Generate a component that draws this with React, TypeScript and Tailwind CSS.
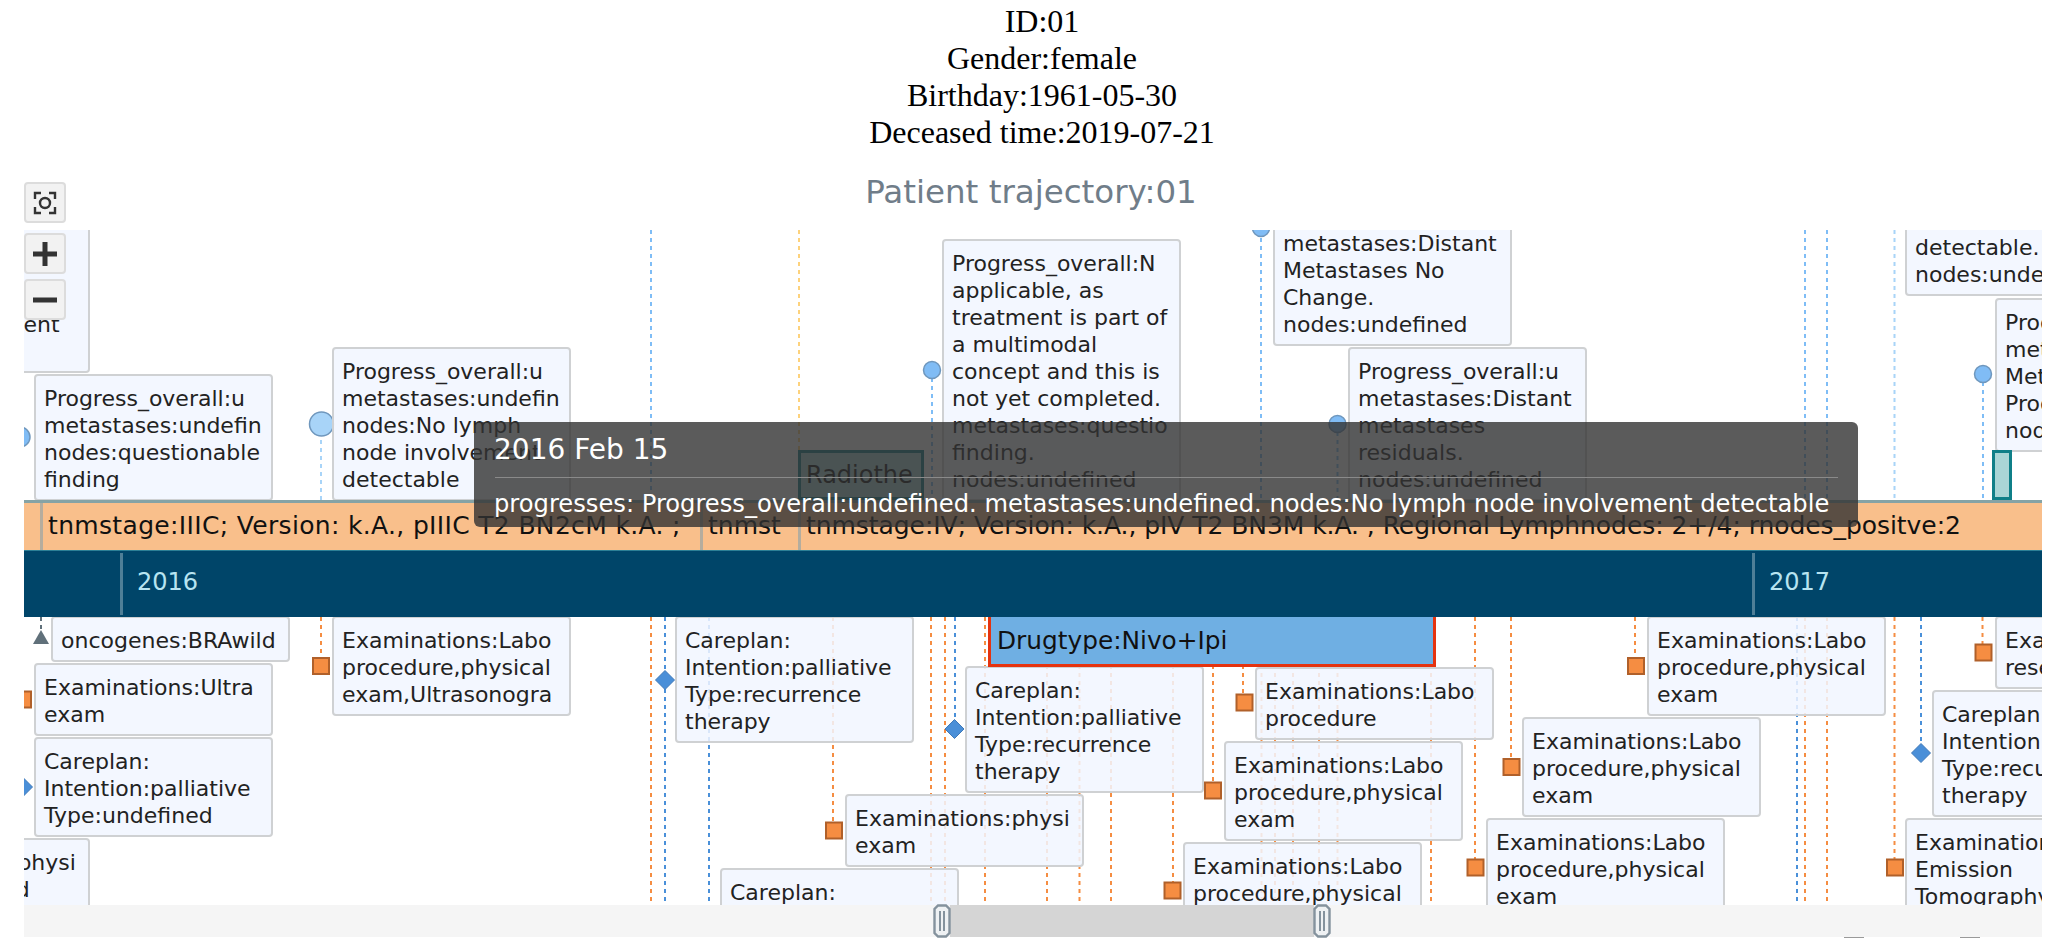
import React from "react";

type Label = { x: number; y: number; lines: string[]; w?: number };
type Line = { x: number; y1: number; y2: number; color: string };

const ORANGE = "#f58d42";
const BLUE = "#4a90d9";
const SKY = "#7fbdf6";

const upperLabels: Label[] = [
  { x: -149, y: 192, lines: ["", "Progress_overall:is", "Change.", "nodes:No lymph", "node involvement", "detectable"] },
  { x: 808, y: 130, lines: ["Progress_overall:u", "metastases:undefin", "nodes:undefined"] },
  { x: 34, y: 374, lines: ["Progress_overall:u", "metastases:undefin", "nodes:questionable", "finding"] },
  { x: 332, y: 347, lines: ["Progress_overall:u", "metastases:undefin", "nodes:No lymph", "node involvement", "detectable"] },
  {
    x: 942,
    y: 239,
    lines: [
      "Progress_overall:N",
      "applicable, as",
      "treatment is part of",
      "a multimodal",
      "concept and this is",
      "not yet completed.",
      "metastases:questio",
      "finding.",
      "nodes:undefined",
    ],
  },
  { x: 1273, y: 192, lines: ["Progress_overall:u", "metastases:Distant", "Metastases No", "Change.", "nodes:undefined"] },
  { x: 1348, y: 347, lines: ["Progress_overall:u", "metastases:Distant", "metastases", "residuals.", "nodes:undefined"] },
  { x: 1905, y: 196, lines: ["metastases:No", "detectable.", "nodes:undefined"] },
  { x: 1995, y: 298, lines: ["Progress_overall:u", "metastases:Distant", "Metastases", "Progress.", "nodes:undefined"] },
];

const lab3 = ["Examinations:Labo", "procedure,physical", "exam"];
const care4 = ["Careplan:", "Intention:palliative", "Type:recurrence", "therapy"];

const lowerLabels: Label[] = [
  { x: 51, y: 616, lines: ["oncogenes:BRAwild"] },
  { x: 34, y: 663, lines: ["Examinations:Ultra", "exam"] },
  { x: 34, y: 737, lines: ["Careplan:", "Intention:palliative", "Type:undefined"] },
  { x: -149, y: 838, lines: ["Examinations:physi", "Type:undefined"] },
  { x: 332, y: 616, lines: ["Examinations:Labo", "procedure,physical", "exam,Ultrasonogra"] },
  { x: 675, y: 616, lines: care4 },
  { x: 965, y: 666, lines: care4 },
  { x: 845, y: 794, lines: ["Examinations:physi", "exam"] },
  { x: 720, y: 868, lines: ["Careplan:", "Intention:palliative"] },
  { x: 1255, y: 667, lines: ["Examinations:Labo", "procedure"] },
  { x: 1224, y: 741, lines: lab3 },
  { x: 1183, y: 842, lines: lab3 },
  { x: 1647, y: 616, lines: lab3 },
  { x: 1522, y: 717, lines: lab3 },
  { x: 1486, y: 818, lines: lab3 },
  { x: 1995, y: 616, lines: ["Examinations:Labo", "resection"] },
  { x: 1932, y: 690, lines: care4 },
  { x: 1905, y: 818, lines: ["Examinations:Positron", "Emission", "Tomography"] },
];

const upperLines: Line[] = [
  { x: 321, y1: 424, y2: 500, color: "#a8d4f8" },
  { x: 651, y1: 230, y2: 500, color: SKY },
  { x: 799, y1: 230, y2: 450, color: "#fdd27c" },
  { x: 932, y1: 370, y2: 500, color: SKY },
  { x: 1261, y1: 230, y2: 500, color: SKY },
  { x: 1337.5, y1: 424, y2: 500, color: SKY },
  { x: 1805, y1: 230, y2: 500, color: SKY },
  { x: 1827, y1: 230, y2: 500, color: SKY },
  { x: 1894.5, y1: 230, y2: 500, color: "#a8d4f8" },
  { x: 1983, y1: 374, y2: 500, color: SKY },
];

// connector tops all sit at the axis, only the bottom end differs
const orangeEnds: [number, number][] = [
  [321, 657],
  [651, 905],
  [833, 822],
  [931, 905],
  [945, 905],
  [985, 905],
  [1047, 905],
  [1079.5, 905],
  [1111, 905],
  [1173, 882],
  [1213, 782],
  [1243, 694],
  [1261.5, 905],
  [1275, 905],
  [1293, 905],
  [1319, 905],
  [1337.5, 905],
  [1431, 905],
  [1475, 859],
  [1511, 758],
  [1635, 657],
  [1805, 905],
  [1827, 905],
  [1894.5, 859],
  [1982.5, 644],
];
const blueEnds: [number, number][] = [
  [665, 905],
  [709, 905],
  [955, 729],
  [1797, 905],
  [1921, 753],
];
const lowerLines: Line[] = [
  { x: 41, y1: 617, y2: 630, color: "#60707a" },
  ...orangeEnds.map(([x, y2]) => ({ x, y1: 617, y2, color: ORANGE })),
  ...blueEnds.map(([x, y2]) => ({ x, y1: 617, y2, color: BLUE })),
];

const upperDots = [
  { cx: 20, cy: 437, r: 10, fill: "#80bcf5" },
  { cx: 321.5, cy: 424, r: 12, fill: "#a8d4f8" },
  { cx: 932, cy: 370, r: 8.5, fill: "#80bcf5" },
  { cx: 1261, cy: 228, r: 8.5, fill: "#80bcf5" },
  { cx: 1337.5, cy: 424, r: 8.5, fill: "#80bcf5" },
  { cx: 1983, cy: 374, r: 8.5, fill: "#80bcf5" },
];

const squares = [
  [23, 699.5],
  [321, 666],
  [834, 830.5],
  [1172.5, 890.5],
  [1213, 790.5],
  [1244.5, 702.5],
  [1475.5, 867.5],
  [1511.5, 767],
  [1636, 666],
  [1895, 867.5],
  [1983.5, 652.5],
];

const diamonds = [
  [23, 787],
  [665, 680],
  [954.5, 729],
  [1921, 753],
];

function Connectors({ lines }: { lines: Line[] }) {
  return lines.map((l, i) => (
    <line key={i} x1={l.x} x2={l.x} y1={l.y1} y2={l.y2} stroke={l.color} strokeWidth={2} strokeDasharray="4 4" />
  ));
}

function LabelBox({ label, originY }: { label: Label; originY: number }) {
  return (
    <div
      className="absolute rounded-[4px] border-2 border-[#cfd1d3] bg-[#f1f6ff]/85 px-2 pt-[8.5px] pb-[6.5px] overflow-hidden text-[22px] leading-[27px] text-[#222] whitespace-nowrap"
      style={{ left: label.x - 24, top: label.y - originY, width: label.w ?? 239 }}
    >
      {label.lines.map((line, i) => (
        <div key={i} className="h-[27px]">
          {line}
        </div>
      ))}
    </div>
  );
}

function Handle({ left }: { left: string }) {
  return (
    <svg className={`absolute top-[-1px] ${left}`} width="18" height="34" viewBox="0 0 18 34">
      <path
        d="M5 1.5 H13 L16.5 5 V29 L13 32.5 H5 L1.5 29 V5 Z"
        fill="#eef1f3"
        stroke="#84929d"
        strokeWidth="2.4"
      />
      <path d="M7 7 V27 M11 7 V27" stroke="#84929d" strokeWidth="2" />
    </svg>
  );
}

function ToolButton({ children, className }: { children: React.ReactNode; className?: string }) {
  return (
    <div
      className={`flex h-[41px] w-[42px] items-center justify-center rounded-[4px] border-2 border-[#dcdcdc] bg-[#f2f2f2] ${className ?? ""}`}
    >
      {children}
    </div>
  );
}

export default function App() {
  return (
    <div className="relative h-[938px] w-full overflow-hidden bg-white font-['DejaVu_Sans',sans-serif]">
      {/* Patient header */}
      <div className="h-[152px] pl-[22px] pt-[3px] text-center font-['Liberation_Serif',serif] text-[32px] leading-[37px] text-black">
        <div>ID:01</div>
        <div>Gender:female</div>
        <div>Birthday:1961-05-30</div>
        <div>Deceased time:2019-07-21</div>
      </div>
      <div className="mt-[20px] mb-[18px] text-center text-[32.5px] leading-[40px] text-[#707d89]">
        Patient trajectory:01
      </div>

      {/* Chart */}
      <div className="ml-[24px] w-[2018px]">
        <div className="relative h-[270px] overflow-hidden">
          <svg className="absolute inset-0" width="2018" height="270" viewBox="24 230 2018 270">
            <Connectors lines={upperLines} />
            {upperDots.map((d, i) => (
              <circle key={i} cx={d.cx} cy={d.cy} r={d.r} fill={d.fill} stroke="#6f97bd" strokeWidth={1.5} />
            ))}
          </svg>
          {upperLabels.map((l, i) => (
            <LabelBox key={i} label={l} originY={230} />
          ))}
          <div className="absolute left-[774px] top-[220px] h-[50px] w-[126px] overflow-hidden border-[3px] border-[#0f7f88] bg-[#a9d5d6] pl-[5px] text-[24px] leading-[44px] text-[#111]">
            Radiothe
          </div>
          <div className="absolute left-[1968px] top-[220px] h-[50px] w-[20px] border-[3px] border-[#0f7f88] bg-[#a9d5d6]" />
        </div>

        {/* Stage band */}
        <div className="flex h-[51px] border-t-[3px] border-b border-t-[#86a3a5] border-b-[#2c7f96] bg-[#f9bf8b] text-[25px] leading-[46px] text-[#111] whitespace-nowrap">
          <div className="w-[16px]" />
          <div className="w-[660px] border-l-[3px] border-[#b5ad9e] pl-[5px] tracking-[0.33px]">
            tnmstage:IIIC; Version: k.A., pIIIC T2 BN2cM k.A. ;
          </div>
          <div className="w-[98px] border-l-[3px] border-[#b5ad9e] pl-[5px]">tnmst</div>
          <div className="flex-1 border-l-[3px] border-[#b5ad9e] pl-[5px] tracking-[-0.06px]">
            tnmstage:IV; Version: k.A., pIV T2 BN3M k.A. , Regional Lymphnodes: 2+/4; rnodes_positve:2
          </div>
        </div>

        {/* Time axis */}
        <div className="flex h-[66px] bg-[#004569] py-[2px] text-[24px] leading-[58px] text-[#b7e4f1]">
          <div className="w-[96px]" />
          <div className="w-[1632px] border-l-[3px] border-[#4f7f97] pl-[14px]">2016</div>
          <div className="flex-1 border-l-[3px] border-[#4f7f97] pl-[14px]">2017</div>
        </div>

        <div className="relative h-[288px] overflow-hidden">
          <svg className="absolute inset-0" width="2018" height="288" viewBox="24 617 2018 288">
            <Connectors lines={lowerLines} />
          </svg>
          {lowerLabels.map((l, i) => (
            <LabelBox key={i} label={l} originY={617} />
          ))}
          <div className="absolute left-[964px] top-[-10px] h-[60px] w-[448px] border-[3px] border-[#e5330f] bg-[#6fafe3] pl-[6px] pt-[17px] text-[24.8px] leading-[27px] text-[#111]">
            Drugtype:Nivo+Ipi
          </div>
          <svg className="absolute inset-0" width="2018" height="288" viewBox="24 617 2018 288">
            <path d="M41 630 L49 644 H33 Z" fill="#60707a" />
            {squares.map(([x, y], i) => (
              <rect key={i} x={x - 8} y={y - 8} width={16} height={16} fill="#f58d42" stroke="#b0602a" strokeWidth={2} />
            ))}
            {diamonds.map(([x, y], i) => (
              <path key={i} d={`M${x} ${y - 9.5} L${x + 9.5} ${y} L${x} ${y + 9.5} L${x - 9.5} ${y} Z`} fill="#4a8fd8" stroke="#3f79b8" />
            ))}
          </svg>
        </div>

        {/* Range slider */}
        <div className="relative h-[32px] bg-[#f5f5f5]">
          <div className="absolute left-[926px] top-0 h-full w-[364px] bg-[#d5d5d5]" />
          <Handle left="left-[909px]" />
          <Handle left="left-[1289px]" />
        </div>
      </div>

      {/* Legend, nearly all of it below the fold */}
      <div className="flex h-px overflow-hidden pl-[1844px]">
        <div className="h-full w-[20px] bg-[#9a9a9a]" />
        <div className="ml-[96px] h-full w-[20px] bg-[#9a9a9a]" />
      </div>

      {/* Zoom tools */}
      <div className="absolute left-[24px] top-[182px] flex flex-col">
        <ToolButton>
          <svg width="24" height="24" viewBox="0 0 24 24" fill="none" stroke="#333" strokeWidth="2.4">
            <path d="M2 8 V2 H8 M16 2 H22 V8 M22 16 V22 H16 M8 22 H2 V16" />
            <circle cx="12" cy="12" r="5" />
          </svg>
        </ToolButton>
        <ToolButton className="mt-[10px]">
          <svg width="26" height="26" viewBox="0 0 26 26" fill="none" stroke="#333" strokeWidth="5">
            <path d="M1 13 H25 M13 1 V25" />
          </svg>
        </ToolButton>
        <ToolButton className="mt-[5px]">
          <svg width="26" height="26" viewBox="0 0 26 26" fill="none" stroke="#333" strokeWidth="5">
            <path d="M1 13 H25" />
          </svg>
        </ToolButton>
      </div>

      {/* Tooltip */}
      <div className="absolute left-[474px] top-[422px] h-[105px] w-[1384px] rounded-md bg-[rgba(50,50,50,0.8)] px-[20px] text-white">
        <div className="h-[55px] text-[28px] leading-[56px]">2016 Feb 15</div>
        <div className="ml-px h-px w-[1343px] bg-[#8a8a8a]" />
        <div className="text-[24.2px] leading-[52px] whitespace-nowrap">
          progresses: Progress_overall:undefined. metastases:undefined. nodes:No lymph node involvement detectable
        </div>
      </div>
    </div>
  );
}
